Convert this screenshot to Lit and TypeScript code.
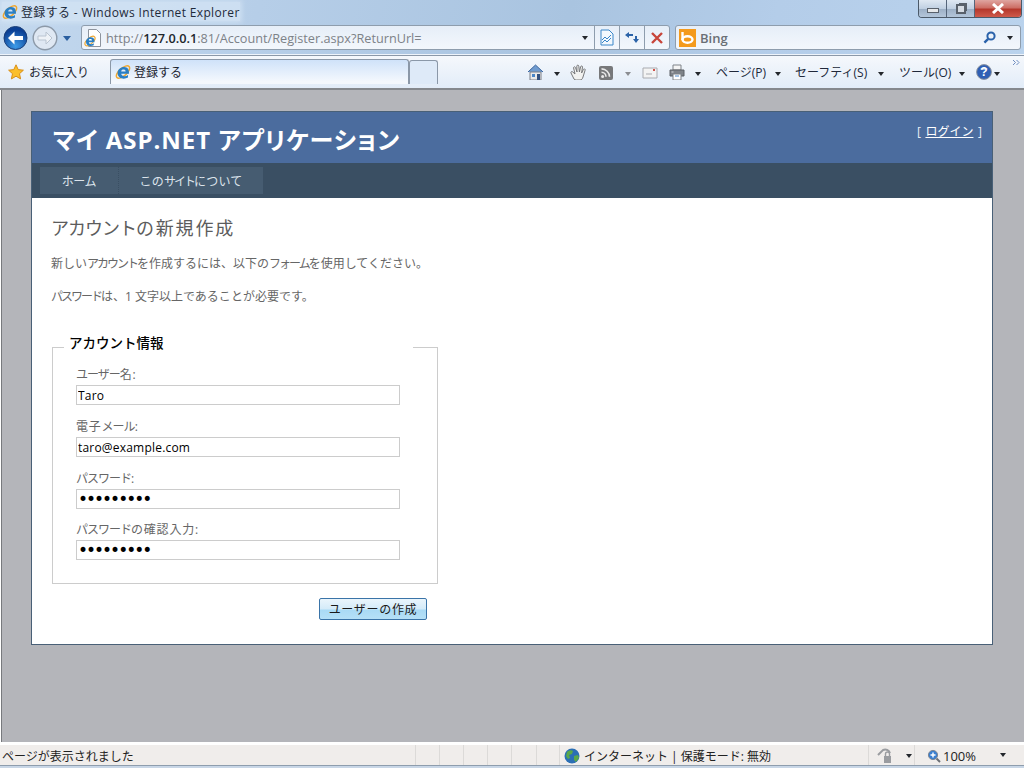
import { css, html, LitElement, svg } from 'lit'
import { customElement } from 'lit/decorators.js'

const ieIcon = (size: number) => html`
  <svg class="icon" width=${size} height=${size} viewBox="0 0 16 16">
    <ellipse cx="8" cy="8" rx="8.200" ry="3.800" transform="rotate(-42 8 8)" fill="none" stroke="#f0a830" stroke-width="1.500" />
    <path d="M14 9.800H6.200c.3 2.600 4 3.400 6.800 1.200v2.600c-4.400 2.400-10.400.8-10.400-4.600C2.600 4.200 8.400 1.400 12 3.800c1.600 1 2 3.400 2 6zM6.200 7.400h4.400c0-2.600-4.200-2.600-4.400 0z" fill="#2a7fc4" fill-rule="evenodd" />
  </svg>
`

const arrow = (kind = '') => html`<span class="arrow ${kind}"></span>`

// the reference font sets katakana tighter than kanji and hiragana
const kata = (text: string) =>
  text.split(/([ァ-ヶー]+)/).map((part, i) => (i % 2 ? html`<span class="k">${part}</span>` : part))

const ICONS: Record<string, ReturnType<typeof svg>> = {
  home: svg`<path d="M1 8 8.500 1 16 8" fill="#6f9bd0" stroke="#3c659c" /><path d="M3 8h11v8H3z" fill="#e9e9ea" stroke="#7a7f88" /><path d="M5 10h3v3H5z" fill="#4a86c8" /><path d="M10 10h3v6h-3z" fill="#33517f" />`,
  hand: svg`<path d="M4 15 1 9c-.6-1.200 1-2 1.800-1L5 10 3.600 4c-.3-1.300 1.500-1.700 1.900-.4L7 8 6.800 2.200c0-1.400 2-1.400 2 0L9.400 8l1.200-5.200c.3-1.300 2.100-1 1.900.3L11.600 9l1.800-3.600c.6-1.100 2.200-.4 1.700.8L13 13c-.6 2-1.400 3-3 3H6.500C5.400 16 4.600 15.800 4 15z" fill="#f2f2f0" stroke="#77787a" />`,
  rss: svg`<rect x="1" y="2" width="14" height="14" rx="2" fill="#77787a" /><circle cx="4.600" cy="12.400" r="1.500" fill="#e8e8e8" /><path d="M3.500 8.200c2.500 0 4.500 2 4.500 4.600M3.500 4.900c4.400 0 8 3.500 8 7.900" fill="none" stroke="#e8e8e8" stroke-width="1.600" />`,
  mail: svg`<path d="M1 4h14v10H1z" fill="#f3f3f3" stroke="#a9abb0" /><path d="M4 10h6" stroke="#a9abb0" /><rect x="11" y="5" width="2" height="2" fill="#d0524c" />`,
  print: svg`<path d="M4 1h8v5H4z" fill="#f4f4f4" stroke="#7f8389" /><path d="M1 6h14v6H1z" fill="#7f8389" stroke="#5d6066" /><path d="M4 10h8v6H4z" fill="#fff" stroke="#7f8389" /><path d="M6 12h4" stroke="#4a86c8" /><rect x="2.500" y="7.500" width="2" height="1" fill="#d5d8dc" />`,
  help: svg`<circle cx="8" cy="8" r="7.400" fill="#2f5fb4" stroke="#8b93a0" /><path d="M4 5a5 3 0 0 1 8 0 6 3 0 0 1-8 0z" fill="#8fb2e6" /><text x="8" y="12.400" text-anchor="middle" font-size="12" font-weight="700" font-family="Liberation Sans, sans-serif" fill="#fff">?</text>`,
}

// widths come from the position of each item along the IE command bar
const COMMANDS: { w: number; icon?: string; label?: string; arrow?: string }[] = [
  { w: 27, icon: 'home' },
  { w: 16, arrow: 'dark' },
  { w: 28, icon: 'hand' },
  { w: 27, icon: 'rss' },
  { w: 17, arrow: 'grey' },
  { w: 27, icon: 'mail' },
  { w: 26, icon: 'print' },
  { w: 21, arrow: 'dark' },
  { w: 59, label: 'ページ(P)' },
  { w: 20, arrow: 'dark' },
  { w: 83, label: 'セーフティ(S)' },
  { w: 21, arrow: 'dark' },
  { w: 60, label: 'ツール(O)' },
  { w: 17, arrow: 'dark' },
  { w: 18, icon: 'help' },
  { w: 10, arrow: 'dark' },
]

const STATUS_CELLS = [416, 24, 24, 24, 24, 25, 23]

@customElement('app-root')
export class AppRoot extends LitElement {
  private renderChrome() {
    return html`
      <header class="chrome">
        <div class="title-row">
          <div class="title">
            ${ieIcon(16)}
            <span>登録する - Windows Internet Explorer</span>
          </div>
          <div class="window-buttons">
            <span class="win-btn"><i class="min"></i></span>
            <span class="win-btn"><i class="restore"></i></span>
            <span class="win-btn close">
              <svg width="14" height="11" viewBox="0 0 14 11">
                <path d="M2 1l10 9M12 1 2 10" stroke="#fff" stroke-width="3" />
              </svg>
            </span>
          </div>
        </div>

        <div class="nav-row">
          <div class="nav-buttons">
            <svg class="icon" width="58" height="26" viewBox="0 0 58 26">
              <defs>
                <radialGradient id="back" cx="50%" cy="85%" r="70%">
                  <stop offset="0" stop-color="#3d9be8" />
                  <stop offset="1" stop-color="#0b3f94" />
                </radialGradient>
              </defs>
              <circle cx="14.500" cy="13" r="11.500" fill="url(#back)" stroke="#1c3f78" />
              <path d="M7 13l6.500-6.500V11H22v4h-8.500v4.500z" fill="#fff" />
              <circle cx="44" cy="13" r="11.800" fill="#dfe8f3" stroke="#8c99a8" stroke-width="1.400" />
              <path d="M51 13l-6-6v4h-8v4h8v4z" fill="#eef2f7" stroke="#b9c4d1" />
            </svg>
            <span class="history-arrow"></span>
          </div>

          <div class="address box">
            <svg class="icon page-icon" width="16" height="18" viewBox="0 0 16 18">
              <path d="M3.500.5h8l4 4v13h-12z" fill="#fff" stroke="#8d949e" />
            </svg>
            <span class="page-ie">${ieIcon(12)}</span>
            <span class="url">http://<b>127.0.0.1</b>:81/Account/Register.aspx?ReturnUrl=</span>
            ${arrow('dark')}
            <span class="addr-btn">
              <svg width="14" height="17" viewBox="0 0 14 17">
                <path d="M1 1h8l4 4v11H1z" fill="#f2f8fd" stroke="#3a86c8" />
                <path d="M2 11l3-3 2 2 4-4M2 14l3-3 2 2 4-4" fill="none" stroke="#3a86c8" />
              </svg>
            </span>
            <span class="addr-btn">
              <svg width="16" height="14" viewBox="0 0 16 14">
                <path d="M1 4l4-3v2h4v2H5v2zM15 8l-3 4-3-4h2V5h2v3z" fill="#2b63a8" />
              </svg>
            </span>
            <span class="addr-btn">
              <svg width="12" height="12" viewBox="0 0 12 12">
                <path d="M1 1l10 10M11 1 1 11" stroke="#c8453a" stroke-width="2.400" />
              </svg>
            </span>
          </div>

          <div class="search box">
            <svg class="icon" width="17" height="18" viewBox="0 0 17 18">
              <rect width="17" height="18" fill="#f49a1c" />
              <path d="M3.500 3v8" stroke="#fff" stroke-width="2.400" />
              <ellipse cx="8.500" cy="10.500" rx="5" ry="3.200" fill="none" stroke="#fff" stroke-width="2.400" />
            </svg>
            <span class="engine">Bing</span>
            <svg class="icon" width="13" height="13" viewBox="0 0 13 13">
              <circle cx="8" cy="5" r="3.600" fill="none" stroke="#2a62aa" stroke-width="2" />
              <path d="M5.200 7.800 1.400 11.600" stroke="#2a62aa" stroke-width="2.400" />
            </svg>
            ${arrow('dark')}
          </div>
        </div>

        <div class="tab-row">
          <div class="favorites">
            <svg class="icon" width="16" height="16" viewBox="0 0 16 16">
              <path d="M8 .8l2.200 4.800 5.200.6-3.900 3.500 1.100 5.200L8 12.200l-4.600 2.700 1.100-5.200L.6 6.200l5.200-.6z" fill="#fbbf2c" stroke="#d88f1a" />
            </svg>
            <span>お気に入り</span>
          </div>
          <div class="tab">
            ${ieIcon(16)}
            <span>登録する</span>
          </div>
          <div class="new-tab"></div>
          <div class="commands">
            ${COMMANDS.map(
              (c) => html`
                <span class="command" style="width:${c.w}px">
                  ${c.icon
                    ? html`<svg class="icon" width="16" height="16" viewBox="0 0 16 16">${ICONS[c.icon]}</svg>`
                    : c.label
                      ? c.label
                      : arrow(c.arrow)}
                </span>
              `,
            )}
          </div>
          <svg class="chevron" width="8" height="7" viewBox="0 0 8 7">
            <path d="M1 1l2.500 2.500L1 6M4.500 1 7 3.500 4.500 6" fill="none" stroke="#6d8cc0" />
          </svg>
        </div>
      </header>
    `
  }

  private renderPage() {
    return html`
      <main class="viewport">
        <div class="page">
          <div class="site-header">
            <h1>マイ ASP.NET アプリケーション</h1>
            <div class="login">[ <a href="#">ログイン</a> ]</div>
          </div>
          <nav class="menu">
            <a class="home" href="#">ホーム</a>
            <a class="about" href="#">${kata('このサイトについて')}</a>
          </nav>
          <section class="content">
            <h2>${kata('アカウントの新規作成')}</h2>
            <p class="intro">${kata('新しいアカウントを作成するには、以下のフォームを使用してください。')}</p>
            <p class="rule">${kata('パスワードは、1 文字以上であることが必要です。')}</p>
            <fieldset>
              <legend>アカウント情報</legend>
              <label>${kata('ユーザー名:')}<input type="text" .value=${'Taro'} /></label>
              <label>${kata('電子メール:')}<input type="text" .value=${'taro@example.com'} /></label>
              <label class="third">${kata('パスワード:')}<input class="secret" type="password" .value=${'password1'} /></label>
              <label class="last">${kata('パスワードの確認入力:')}<input class="secret" type="password" .value=${'password1'} /></label>
            </fieldset>
            <div class="actions"><button type="button">ユーザーの作成</button></div>
          </section>
        </div>
      </main>
    `
  }

  private renderStatus() {
    return html`
      <footer class="status">
        <div class="status-bar">
          ${STATUS_CELLS.map(
            (w, i) => html`<span class="cell" style="width:${w}px">${i === 0 ? 'ページが表示されました' : ''}</span>`,
          )}
          <span class="cell zone">
            <svg class="icon" width="16" height="16" viewBox="0 0 16 16">
              <circle cx="8" cy="8" r="7.500" fill="#2b6fb5" />
              <path d="M3 4c2-2 5-2 6-1L8 6 5 7l1 3-2 1-2-3zM10 8l4-1 1 3-3 4-2-2z" fill="#5aa84a" />
            </svg>
            <span>インターネット | 保護モード: 無効</span>
          </span>
          <span class="cell security">
            <svg class="icon" width="16" height="16" viewBox="0 0 16 16">
              <path d="M1 7l5-5c3-1 6 0 7 3" fill="none" stroke="#9a9ca0" stroke-width="2" />
              <rect x="7" y="8" width="7" height="7" fill="#9a9ca0" />
              <path d="M8.500 8V6a2 2 0 0 1 4 0v2" fill="none" stroke="#9a9ca0" stroke-width="1.400" />
            </svg>
            ${arrow('dark')}
          </span>
          <span class="cell zoom">
            <svg class="icon" width="14" height="14" viewBox="0 0 14 14">
              <circle cx="6" cy="6" r="4.600" fill="#3a7fd0" stroke="#7e8794" />
              <path d="M6 3.500v5M3.500 6h5" stroke="#fff" stroke-width="1.400" />
              <path d="M9.500 9.500 13 13" stroke="#6b6f76" stroke-width="2" />
            </svg>
            <span>100%</span>
          </span>
          ${arrow('dark')}
        </div>
      </footer>
    `
  }

  render() {
    return html`${this.renderChrome()}${this.renderPage()}${this.renderStatus()}`
  }

  static styles = css`
    :host {
      display: flex;
      flex-direction: column;
      width: 1024px;
      height: 768px;
      overflow: hidden;
      font-family: 'Open Sans', 'Noto Sans CJK JP', sans-serif;
      font-size: 12px;
    }

    * {
      box-sizing: border-box;
    }

    .icon {
      display: block;
      flex: none;
    }

    .chrome {
      height: 90px;
      flex: none;
      display: flex;
      flex-direction: column;
      background: linear-gradient(100deg, #c3d8ee 0%, #b6cee8 25%, #a9c4e0 55%, #b4cde9 75%, #bad3ed 100%);
    }

    .title-row {
      height: 25px;
      flex: none;
      display: flex;
      justify-content: space-between;
      padding-left: 2px;
    }

    .title {
      display: flex;
      align-items: center;
      gap: 3px;
      height: 19px;
      margin-top: 2px;
      color: #1e2a3a;
      letter-spacing: 0.35px;
      background: rgba(214, 229, 245, 0.7);
      box-shadow: 0 0 5px 2px rgba(214, 229, 245, 0.7);
    }

    .window-buttons {
      display: flex;
      height: 18px;
      margin-right: 2px;
      width: 104px;
      border: 1px solid #4b5968;
      border-top: 0;
      border-radius: 0 0 4px 4px;
      overflow: hidden;
    }

    .win-btn {
      flex: 1 0 27px;
      display: flex;
      align-items: center;
      justify-content: center;
      background: linear-gradient(#dfe8f2 0%, #c0d0e2 50%, #9db0c6 55%, #b4c6da 100%);
      border-right: 1px solid #55657a;
    }

    .win-btn i {
      display: block;
    }

    .min {
      width: 12px;
      height: 5px;
      margin-top: 4px;
      background: #e6e8ea;
      border: 1px solid #59616b;
    }

    .restore {
      width: 10px;
      height: 10px;
      background: #d6dce3;
      border: 2px solid #59616b;
      box-shadow: 2px -2px 0 -1px #59616b;
    }

    .win-btn.close {
      flex: 0 0 46px;
      border-right: 0;
      background: linear-gradient(#dfa5a0 0%, #cd6f66 45%, #b5382c 55%, #cf5a4a 100%);
    }

    .nav-row {
      height: 30px;
      flex: none;
      display: flex;
      align-items: flex-start;
      padding-left: 1px;
      border-bottom: 1px solid #eef4fb;
    }

    .nav-buttons {
      display: flex;
      align-items: center;
      width: 80px;
      height: 26px;
      flex: none;
    }

    .history-arrow {
      width: 0;
      height: 0;
      margin-left: 4px;
      border: 4.500px solid transparent;
      border-top: 5px solid #2a5fa0;
      border-bottom: 0;
    }

    .box {
      height: 25px;
      display: flex;
      align-items: center;
      background: linear-gradient(#e6eef8, #f3f7fc);
      border: 1px solid #8e9dad;
      border-radius: 3px;
    }

    .address {
      position: relative;
      width: 589px;
      flex: none;
      padding-left: 3px;
    }

    .page-ie {
      position: absolute;
      left: 2px;
      top: 9px;
    }

    .url {
      flex: 1;
      margin-left: 5px;
      color: #7d8288;
      font-family: 'Open Sans', sans-serif;
      font-size: 12.700px;
    }

    .url b {
      font-weight: 600;
      color: #20262c;
    }

    .addr-btn {
      flex: none;
      width: 25px;
      height: 23px;
      display: flex;
      align-items: center;
      justify-content: center;
      border-left: 1px solid #8e9dad;
    }

    .address .arrow {
      margin-right: 6px;
    }

    .search {
      width: 346px;
      flex: none;
      margin-left: 5px;
      padding: 0 4px 0 3px;
    }

    .engine {
      flex: 1;
      margin-left: 4px;
      color: #6a6f75;
      font-size: 13px;
      font-weight: 600;
    }

    .search .arrow {
      margin: 0 3px 0 11px;
    }

    .arrow {
      display: inline-block;
      width: 0;
      height: 0;
      flex: none;
      border-style: solid;
      border-width: 4px 3.500px 0;
      border-color: #23272c transparent transparent;
    }

    .arrow.grey {
      border-top-color: #8b8d91;
    }

    .tab-row {
      position: relative;
      flex: 1;
      display: flex;
      align-items: flex-end;
      padding: 0 0 4px 0;
      background: linear-gradient(#f5f8fc, #e2ecf8);
      border-top: 1px solid #8b98a8;
      border-bottom: 2px solid #85888d;
    }

    .favorites {
      display: flex;
      align-items: center;
      gap: 5px;
      width: 110px;
      height: 25px;
      padding-left: 8px;
      color: #1c2430;
      flex: none;
    }

    .tab {
      display: flex;
      align-items: center;
      gap: 3px;
      width: 299px;
      height: 25px;
      flex: none;
      padding-left: 4px;
      color: #1c2430;
      background: linear-gradient(#cfe2f9, #f4f8fd 90%);
      border: 1px solid #8b98a8;
      border-bottom: 0;
      border-radius: 3px 3px 0 0;
    }

    .new-tab {
      width: 29px;
      height: 24px;
      flex: none;
      background: #deeaf8;
      border: 1px solid #8b98a8;
      border-bottom: 0;
      border-radius: 3px 3px 0 0;
    }

    .commands {
      display: flex;
      align-items: center;
      margin-left: 89px;
      height: 25px;
      flex: none;
      color: #20283a;
    }

    .command {
      display: block;
      flex: none;
      white-space: nowrap;
    }

    .chevron {
      position: absolute;
      right: 4px;
      top: 3px;
    }

    .viewport {
      flex: 1;
      min-height: 0;
      margin-left: 1px;
      padding: 21px 30px 0 29px;
      background: #b4b5ba;
      border-left: 1px solid #77797d;
    }

    .page {
      width: 962px;
      height: 534px;
      background: #fff;
      border: 1px solid #496077;
    }

    .site-header {
      height: 51px;
      display: flex;
      justify-content: space-between;
      background: #4b6c9e;
      color: #fff;
    }

    h1 {
      margin: 12px 0 0 21px;
      font-size: 24px;
      line-height: 32px;
      font-weight: 700;
      font-feature-settings: 'palt';
      letter-spacing: 0.95px;
    }

    .login {
      margin: 12px 10px 0 0;
      line-height: 16px;
      word-spacing: 1.500px;
      color: #e8eef6;
    }

    .login a {
      color: #fff;
    }

    .menu {
      height: 35px;
      display: flex;
      padding: 4px 0 0 8px;
      background: #3a4f63;
    }

    .menu a {
      height: 27px;
      display: flex;
      align-items: center;
      justify-content: center;
      color: #dde4ec;
      background: #465c71;
      text-decoration: none;
    }

    .menu .home {
      width: 79px;
      letter-spacing: -0.4px;
      border-right: 1px dotted #3a4f63;
    }

    .menu .about {
      width: 144px;
      letter-spacing: 0.2px;
    }

    .k {
      letter-spacing: -2px;
    }

    .content {
      padding: 18px 0 0 19px;
      color: #666;
    }

    h2 {
      margin: 0;
      font-size: 18px;
      line-height: 24px;
      font-weight: 400;
      color: #5c5c5c;
      letter-spacing: 1.800px;
    }

    h2 .k {
      letter-spacing: -1px;
    }

    p {
      margin: 0;
      line-height: 16px;
    }

    .intro {
      margin-top: 16px;
    }

    .rule {
      margin-top: 17px;
    }

    fieldset {
      width: 386px;
      height: 248px;
      margin: 31px 0 0 1px;
      padding: 9px 0 0 23px;
      border: 1px solid #ccc;
    }

    legend {
      width: 349px;
      height: 22px;
      margin-left: -12px;
      padding: 0 0 0 5px;
      color: #000;
      font-size: 13.500px;
      line-height: 14px;
      font-weight: 500;
    }

    label {
      display: block;
      width: 324px;
      margin-bottom: 14px;
      line-height: 16px;
      color: #666;
      letter-spacing: 0.8px;
    }

    label .k {
      letter-spacing: -1px;
    }

    label.third {
      margin-bottom: 13px;
    }

    label.last {
      margin-bottom: 0;
    }

    input {
      display: block;
      width: 324px;
      height: 20px;
      margin-top: 2px;
      padding: 0 1px 0 1px;
      border: 1px solid #ccc;
      border-radius: 0;
      outline: 0;
      color: #000;
      font: 12px 'Open Sans', sans-serif;
      letter-spacing: 0.2px;
    }

    input.secret {
      font-family: 'DejaVu Sans', sans-serif;
      font-size: 17px;
      letter-spacing: -2px;
    }

    .actions {
      width: 376px;
      margin-top: 14px;
      display: flex;
      justify-content: flex-end;
    }

    button {
      width: 108px;
      height: 22px;
      padding: 0;
      border: 1px solid #3a74a8;
      border-radius: 2px;
      color: #1a1a1a;
      font: inherit;
      letter-spacing: 0.7px;
      background: linear-gradient(#eaf5fc 0%, #d4ebf9 50%, #a9daf5 55%, #b5e0f7 100%);
    }

    .status {
      height: 26px;
      flex: none;
      padding-top: 3px;
      background: linear-gradient(#fff 24px, #c8d6e6 24px);
    }

    .status-bar {
      height: 21px;
      display: flex;
      align-items: center;
      background: #f0edeb;
      border-bottom: 1px solid #8e9dad;
      color: #222;
    }

    .cell {
      height: 100%;
      flex: none;
      display: flex;
      align-items: center;
      padding: 2px 0 0 2px;
      border-right: 1px solid #dcdad8;
      white-space: nowrap;
    }

    .zone {
      width: 309px;
      gap: 4px;
      padding-left: 4px;
    }

    .security {
      width: 46px;
      gap: 13px;
      padding-left: 8px;
    }

    .zoom {
      width: 85px;
      gap: 2px;
      padding-left: 12px;
      border-right: 0;
      font-size: 13px;
    }
  `
}
